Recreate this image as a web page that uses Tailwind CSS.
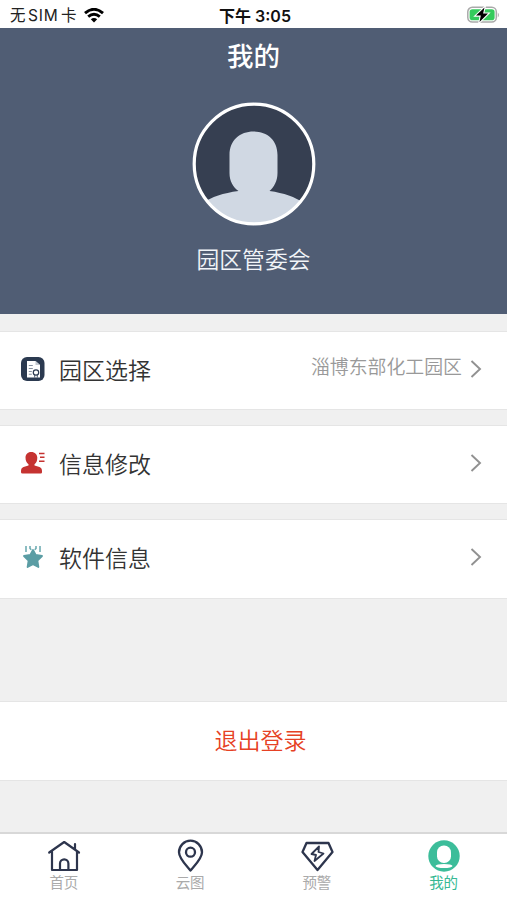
<!DOCTYPE html>
<html lang="zh-CN">
<head>
<meta charset="utf-8">
<meta name="viewport" content="width=device-width, initial-scale=1">
<title>我的</title>
<script src="https://cdn.jsdelivr.net/npm/@tailwindcss/browser@4"></script>
</head>
<body class="bg-[#f0f0f0]">
<div class="flex h-[900px] w-[507px] flex-col overflow-hidden font-['Inter','Noto_Sans_CJK_SC',sans-serif] whitespace-nowrap">
  <div class="grid h-7 shrink-0 grid-cols-3 items-center bg-white pl-[10px] pr-[7px] text-black">
    <div class="flex items-center gap-[7px]">
      <span class="pt-[2px] text-[15.5px] leading-7 tracking-[0.1px] text-[#222] [word-spacing:-2px]">无 <span class="tracking-[0.8px]">SIM</span> 卡</span>
      <svg class="h-[15px] w-5" viewBox="0 0 20 15" fill="none" stroke="#000" stroke-width="2.9"><path d="M1 5.2Q10-2.6 19 5.2"/><path d="M4.2 8.6Q10 3.7 15.800 8.600"/><path d="M6.800 11.200Q10 8.600 13.200 11.200L10 14.500Z" fill="#000" stroke="none"/></svg>
    </div>
    <span class="pt-px text-center text-[16px] font-semibold leading-7 text-[#111]">下午 3:05</span>
    <svg class="h-[18px] w-[33px] justify-self-end" viewBox="0 0 33 18"><rect x=".8" y="1.300" width="28.500" height="14.800" rx="4.500" fill="#fff" stroke="#aaa" stroke-width="1.500"/><rect x="2.600" y="3.200" width="25" height="11" rx="2.800" fill="#35cb5c"/><path d="M30.800 6.500Q33 9 30.800 11.500Z" fill="#aaa"/><path d="M17.500 1.500L9 9.600h4.800L12.500 16 21 7.500h-4.900Z" fill="#000" stroke="#fff" stroke-width="2.200" paint-order="stroke"/></svg>
  </div>

  <header class="flex h-[286px] shrink-0 flex-col items-center bg-[#505d74] text-white">
    <h1 class="mt-2 text-[26.5px] font-medium leading-10">我的</h1>
    <svg class="mt-[26px] h-[124px] w-[124px]" viewBox="0 0 124 124">
      <defs><clipPath id="face"><circle cx="62" cy="62" r="60"/></clipPath></defs>
      <circle cx="62" cy="62" r="60" fill="#363f51"/>
      <g clip-path="url(#face)" fill="#d0d8e3"><path d="M37.500 53C37.500 38 48 29.500 61.500 29.500S85.500 38 85.500 53V71C85.500 79 82 85 77.500 89C92 91 103 95 112 101V124H10V101C20 95 31 91 46.500 89C41 85 37.500 79 37.500 71Z"/></g>
      <circle cx="62" cy="62" r="59.800" fill="none" stroke="#fff" stroke-width="3.200"/>
    </svg>
    <p class="mt-4 text-[22.800px] font-[350] leading-9 text-[#f1f4f8]">园区管委会</p>
  </header>

  <main class="flex grow flex-col pt-[17px]">
    <div class="flex h-[79px] items-center border-y border-[#e5e5e5] bg-white pl-[21px] pr-[25px]">
      <svg class="relative -top-[2px] h-6 w-6" viewBox="0 0 24 24"><rect width="23.500" height="24" rx="6" fill="#2b3a50"/><path d="M6 4h8.500l4.500 4v12.500H6Z" fill="#fff"/><path d="M14.500 4v4H19" fill="#c2c8d0"/><path d="M7.800 8.500h4M7.800 11.500h4M7.800 14.500h3M7.800 17.200h3" stroke="#8791a0" stroke-width="1.100"/><circle cx="15" cy="15.500" r="2.700" fill="#fff" stroke="#2b3a50" stroke-width="1.200"/><path d="M13.700 18v2.500M16.300 18v2.500" stroke="#2b3a50" stroke-width=".8"/></svg>
      <span class="ml-[14px] text-[23px] font-[350] leading-9 text-[#333]">园区选择</span>
      <span class="relative -top-[3px] ml-auto text-[18.900px] font-[350] leading-8 text-[#999]">淄博东部化工园区</span>
      <svg class="relative -top-[2px] ml-2 h-[18px] w-3" viewBox="0 0 12 18" fill="none" stroke="#919191" stroke-width="1.900"><path d="M1.500 1L10 9l-8.500 8"/></svg>
    </div>
    <div class="mt-[15px] flex h-[79px] items-center border-y border-[#e5e5e5] bg-white pl-[21px] pr-[25px]">
      <svg class="relative -top-[2px] h-6 w-6" viewBox="0 0 24 24" fill="#c53331"><path d="M10.200 1C6.500 1 4.500 3.500 4.500 6.500c0 3 1 5.500 3 6.800v1.300L2.500 16C.7 16.700 0 18 0 20v1.200q0 1.300 1.500 1.300h18.200q1.300 0 1.300-1.300V20c0-2-.7-3.300-2.500-4l-5-1.400v-1.300C15.500 12 16.300 9.500 16.300 6.500 16.300 3.500 14 1 10.200 1Z"/><path d="M18 1.800h5.500v1.500H18ZM19 5.600h4.500v1.500H19ZM18 9.400h5.500v1.500H18Z"/></svg>
      <span class="ml-[14px] text-[23px] font-[350] leading-9 text-[#333]">信息修改</span>
      <svg class="relative -top-[2px] ml-auto h-[18px] w-3" viewBox="0 0 12 18" fill="none" stroke="#919191" stroke-width="1.900"><path d="M1.500 1L10 9l-8.500 8"/></svg>
    </div>
    <div class="mt-[15px] flex h-[80px] items-center border-y border-[#e5e5e5] bg-white pl-[21px] pr-[25px]">
      <svg class="relative -top-[2px] h-6 w-6" viewBox="0 0 24 24"><path d="M12 5l2.700 5 6.300 1-4.600 4.700 1 6.300-5.400-2.700L6.600 22l1-6.300L3 11l6.300-1Z" fill="#5b9da4" stroke="#5b9da4" stroke-width="1.800" stroke-linejoin="round"/><path d="M5 1v6M19 1v6M9 1v2.500l1.300 1.300M15 1v2.500l-1.300 1.300" fill="none" stroke="#67a8ae" stroke-width="1.500"/></svg>
      <span class="ml-[14px] text-[23px] font-[350] leading-9 text-[#333]">软件信息</span>
      <svg class="relative -top-[2px] ml-auto h-[18px] w-3" viewBox="0 0 12 18" fill="none" stroke="#919191" stroke-width="1.900"><path d="M1.500 1L10 9l-8.500 8"/></svg>
    </div>
    <button class="mt-[102px] block h-[80px] border-y border-[#e5e5e5] bg-white pl-[14px] text-center text-[23px] font-[350] leading-9 text-[#e64124]">退出登录</button>
  </main>

  <nav class="grid h-[68px] shrink-0 grid-cols-4 border-t-2 border-[#d8d8d8] bg-white text-[14.500px] leading-5 text-[#aaa]">
    <div class="flex flex-col items-center pl-px pt-[5px]">
      <svg class="h-[34px] w-[34px]" viewBox="0 0 34 34" fill="none" stroke="#2d354d" stroke-width="2.200" stroke-linecap="round" stroke-linejoin="round"><path d="M2.200 13.500L17.200 3 32 13.500M5 12.500V31H30V12.500M28 10V5M13 30.500V24.500a4.200 4.200 0 0 1 8.400 0V30.500"/></svg>
      <span>首页</span>
    </div>
    <div class="flex flex-col items-center pt-[5px]">
      <svg class="h-[34px] w-[34px]" viewBox="0 0 34 34" fill="none" stroke="#2d354d" stroke-width="2.300" stroke-linejoin="round"><path d="M17.500 31.500C13 26 6 19.500 6 13.200a11.500 11.500 0 0 1 23 0C29 19.500 22 26 17.500 31.500Z"/><circle cx="17.500" cy="13.200" r="4.500"/></svg>
      <span>云图</span>
    </div>
    <div class="flex flex-col items-center pt-[5px]">
      <svg class="h-[34px] w-[34px]" viewBox="0 0 34 34" fill="none" stroke="#2d354d" stroke-width="2.300" stroke-linejoin="round"><path d="M6.500 4H28.500L32.500 13 17.500 31 2.500 13Z"/><path d="M19 7.500L11.500 15l4.500 1-1.500 6L23.500 14.500l-5-1.500Z" stroke-width="1.800"/></svg>
      <span>预警</span>
    </div>
    <div class="flex flex-col items-center pt-[5px] text-[#36b994]">
      <svg class="h-[34px] w-[34px]" viewBox="0 0 34 34"><circle cx="17" cy="17" r="15.700" fill="#3cbd9a"/><rect x="10" y="6.500" width="14" height="17.500" rx="6.800" fill="#fff"/><ellipse cx="17" cy="27" rx="8.500" ry="2" fill="#fff"/></svg>
      <span>我的</span>
    </div>
  </nav>
</div>
</body>
</html>
